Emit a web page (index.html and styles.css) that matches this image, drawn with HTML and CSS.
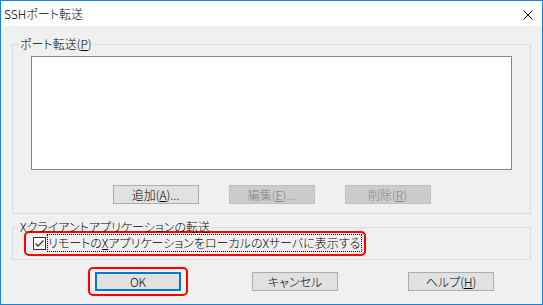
FILE: index.html
```html
<!DOCTYPE html>
<html lang="ja">

<head>
    <meta charset="UTF-8">
    <meta name="viewport" content="width=device-width, initial-scale=1.0">
    <title>SSHポート転送</title>
    <link rel="stylesheet" href="styles.css">
</head>

<body>
    <div class="window">
        <div class="titlebar">
            <span class="title">SSHポート転送</span>
            <svg class="close" width="10" height="10" viewBox="0 0 10 10">
                <path d="M0.5 0.5 L9.5 9.5 M9.5 0.5 L0.5 9.5" stroke="#000" stroke-width="1" fill="none" />
            </svg>
        </div>
        <div class="client">
            <fieldset class="group">
                <legend>ポート転送(<u>P</u>)</legend>
                <div class="group-body ports-body">
                    <div class="listbox"></div>
                    <div class="row-buttons">
                        <button class="btn">追加(<u>A</u>)...</button>
                        <button class="btn" disabled>編集(<u>E</u>)...</button>
                        <button class="btn" disabled>削除(<u>R</u>)</button>
                    </div>
                </div>
            </fieldset>
            <fieldset class="group group-x11">
                <legend>Xクライアントアプリケーションの転送</legend>
                <div class="group-body x11-body">
                    <div class="mark mark-check">
                        <label class="check">
                            <span class="box">
                                <svg width="11" height="11" viewBox="0 0 11 11">
                                    <path d="M1.5 5.5 L4 8 L9.5 2.5" stroke="#333" stroke-width="1.3" fill="none" />
                                </svg>
                            </span>
                            <span class="focus">リモートの<u>X</u>アプリケーションをローカルのXサーバに表示する</span>
                        </label>
                    </div>
                </div>
            </fieldset>
            <div class="dialog-buttons">
                <div class="mark mark-ok">
                    <button class="btn btn-default">OK</button>
                </div>
                <button class="btn btn-cancel">キャンセル</button>
                <button class="btn btn-help">ヘルプ(<u>H</u>)</button>
            </div>
        </div>
    </div>
</body>

</html>
```

FILE: styles.css
```css
body {
    margin: 0;
    font-family: "Noto Sans CJK JP", sans-serif;
    font-size: 12px;
    font-weight: 300;
    font-feature-settings: "palt";
    color: #000;
}

.window {
    width: 543px;
    height: 305px;
    box-sizing: border-box;
    border: 1px solid #1883d7;
    background-color: #f0f0f0;
    display: flex;
    flex-direction: column;
}

.titlebar {
    height: 25px;
    background-color: #fff;
    display: flex;
    align-items: center;
    justify-content: space-between;
    padding: 0 9px 0 3px;
}

.title {
    line-height: 14px;
}

.close {
    margin-top: 2px;
}

.client {
    padding: 11px 11px 0 11px;
}

.group {
    margin: 0;
    padding: 0;
    border: 1px solid #dcdcdc;
    min-width: 0;
}

.group legend {
    margin-left: 6px;
    padding: 0 1px;
    line-height: 14px;
}

.ports-body {
    padding: 0 18px 9px 18px;
}

.listbox {
    margin-top: 5px;
    height: 114px;
    box-sizing: border-box;
    border: 1px solid #828790;
    background-color: #fff;
}

.row-buttons {
    margin-top: 15px;
    display: flex;
    justify-content: center;
    gap: 30px;
}

.btn {
    width: 86px;
    height: 19px;
    box-sizing: border-box;
    padding: 0;
    border: 1px solid #adadad;
    background-color: #e1e1e1;
    font-family: inherit;
    font-size: 12px;
    font-weight: 300;
    font-feature-settings: "palt";
    line-height: 15px;
    color: #000;
}

.btn:disabled {
    background-color: #cccccc;
    border-color: #bfbfbf;
    color: #838383;
}

.btn-default {
    border: 2px solid #0078d7;
}

.group-x11 {
    margin-top: 6px;
}

.x11-body {
    padding: 0 0 3px 11px;
}

.mark {
    border: 2px solid #f00;
    border-radius: 5px;
}

.mark-check {
    margin-top: -3px;
    width: fit-content;
    padding: 1px 2px 2px 7px;
}

.check {
    display: flex;
    align-items: center;
    height: 18px;
}

.box {
    width: 13px;
    height: 13px;
    box-sizing: border-box;
    border: 1px solid #333;
    background-color: #fff;
    display: flex;
    margin-right: 1px;
}

.focus {
    border: 1px dotted #000;
    line-height: 16px;
    padding-right: 1px;
}

.dialog-buttons {
    margin-top: 7px;
    padding-left: 76px;
    display: flex;
    align-items: center;
}

.mark-ok {
    padding: 3px 5px;
}

.btn-cancel {
    margin-left: 64px;
}

.btn-help {
    margin-left: 70px;
}
```
